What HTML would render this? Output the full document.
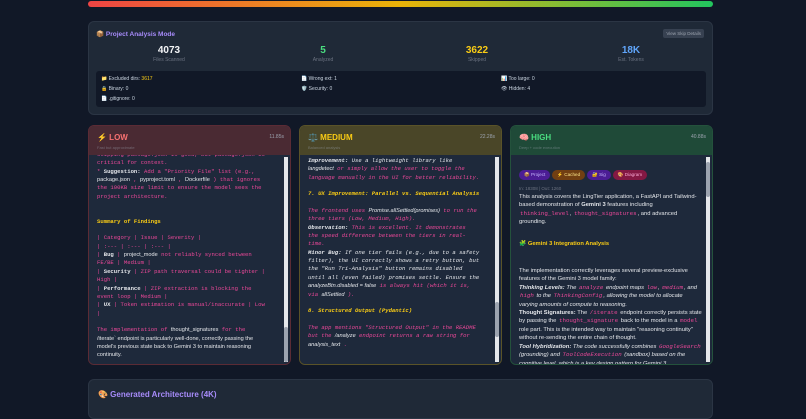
<!DOCTYPE html>
<html><head><meta charset="utf-8"><style>
*{box-sizing:border-box;margin:0;padding:0}
body{width:806px;height:407px;background:#111827;font-family:"Liberation Sans",sans-serif;overflow:hidden;position:relative;color:#d1d5db}
.bar{position:absolute;left:88px;top:1px;width:625px;height:6px;border-radius:3px;background:linear-gradient(90deg,#ef4444,#eab308 50%,#22c55e)}
.card{position:absolute;background:#1f2937;border:1px solid #2b3544;border-radius:6px}
.t{position:absolute;white-space:nowrap}
.num{font-weight:bold;font-size:10px;text-align:center;width:100px}
.lbl{font-size:5px;color:#6b7280;text-align:center;width:100px}
.sm{font-size:5px;color:#cbd5e1}
.col{position:absolute;top:125px;width:203px;height:240px;border-radius:6px;overflow:hidden;background:#1f2937}
.hd{height:29px;position:relative}
.hd b{position:absolute;left:8px;top:7px;font-size:8px}
.hd i{position:absolute;left:8px;top:19px;font-size:4px;color:#9ca3af;font-style:normal;opacity:.5}
.hd s{position:absolute;right:6px;top:8px;font-size:5px;color:#9ca3af;text-decoration:none}
.body{position:absolute;left:0;top:29px;right:0;bottom:0;background:#1e293b;padding:2px 10px 0 8px;overflow:hidden}
.sc{position:absolute;right:2px;top:31px;bottom:2px;width:4px;background:#e5e7eb}
.sc div{position:absolute;left:0;width:4px;background:#9ca3af;border-radius:2px}
.m{font-family:"Liberation Mono",monospace;font-size:5.6px;line-height:8.35px;color:#ec4899;white-space:pre}
.m b{color:#e5e7eb}.y{color:#facc15;font-weight:bold}
.p{font-family:"Liberation Sans",sans-serif;font-size:5.6px;color:#e5e7eb}
.it{font-style:italic}
.h{font-size:5.8px;line-height:8.4px;color:#e5e7eb}
.c{font-family:"Liberation Mono",monospace;color:#ec4899;padding:0 1px}
.tag{display:inline-block;font-size:4.6px;padding:2px 5px;border-radius:6px;margin-right:2px}
</style></head><body>
<div class="bar"></div>
<div class="card" style="left:88px;top:21px;width:625px;height:94px">
 <div class="t" style="left:7px;top:8px;font-size:6.5px;font-weight:bold;color:#a78bfa">📦 Project Analysis Mode</div>
 <div class="t" style="right:8px;top:7px;font-size:4.5px;color:#9ca3af;background:#374151;padding:2px 3px;border-radius:2px">View Skip Details</div>
 <div class="t num" style="left:30px;top:23px;color:#f3f4f6">4073</div>
 <div class="t lbl" style="left:30px;top:35px">Files Scanned</div>
 <div class="t num" style="left:184px;top:23px;color:#4ade80">5</div>
 <div class="t lbl" style="left:184px;top:35px">Analyzed</div>
 <div class="t num" style="left:338px;top:23px;color:#facc15">3622</div>
 <div class="t lbl" style="left:338px;top:35px">Skipped</div>
 <div class="t num" style="left:492px;top:23px;color:#60a5fa">18K</div>
 <div class="t lbl" style="left:492px;top:35px">Est. Tokens</div>
 <div style="position:absolute;left:7px;top:49px;width:610px;height:36px;background:#111827;border-radius:3px">
  <div class="t sm" style="left:5px;top:5px">📁 Excluded dirs: <span style="color:#facc15">3617</span></div>
  <div class="t sm" style="left:205px;top:5px">📄 Wrong ext: 1</div>
  <div class="t sm" style="left:405px;top:5px">📊 Too large: 0</div>
  <div class="t sm" style="left:5px;top:15px">🔒 Binary: 0</div>
  <div class="t sm" style="left:205px;top:15px">🛡️ Security: 0</div>
  <div class="t sm" style="left:405px;top:15px">👁 Hidden: 4</div>
  <div class="t sm" style="left:5px;top:25px">📄 .gitignore: 0</div>
 </div>
</div>

<div class="col" style="left:88px;border:1px solid #5b2b35">
 <div class="hd" style="background:#4a2a33"><b style="color:#f87171">⚡ LOW</b><i>Fast but approximate</i><s>11.85s</s></div>
 <div class="body"><div class="m" style="margin-top:-6px">skipping package.json is good, but package.json is
critical for context.
* <b>Suggestion:</b> Add a "Priority File" list (e.g.,
<span class="p">package.json</span> , <span class="p">pyproject.toml</span> , <span class="p">Dockerfile</span> ) that ignores
the 100KB size limit to ensure the model sees the
project architecture.


<span class="y">Summary of Findings</span>

| Category | Issue | Severity |
| :--- | :--- | :--- |
| <b>Bug</b> | <span class="p">project_mode</span> not reliably synced between
FE/BE | Medium |
| <b>Security</b> | ZIP path traversal could be tighter |
High |
| <b>Performance</b> | ZIP extraction is blocking the
event loop | Medium |
| <b>UX</b> | Token estimation is manual/inaccurate | Low
|

The implementation of <span class="p">thought_signatures</span> for the
<span class="p">/iterate` endpoint is particularly well-done, correctly passing the
model's previous state back to Gemini 3 to maintain reasoning
continuity.</span></div></div>
 <div class="sc"><div style="top:170px;height:35px"></div></div>
</div>

<div class="col" style="left:299px;border:1px solid #5a5328">
 <div class="hd" style="background:#4a4628"><b style="color:#facc15">⚖️ MEDIUM</b><i>Balanced analysis</i><s>22.28s</s></div>
 <div class="body"><div class="m it"><b>Improvement:</b> <span style="color:#e5e7eb">Use a lightweight library like</span>
<span class="p">langdetect</span> or simply allow the user to toggle the
language manually in the UI for better reliability.

<span class="y">7. UX Improvement: Parallel vs. Sequential Analysis</span>

The frontend uses <span class="p">Promise.allSettled(promises)</span> to run the
three tiers (Low, Medium, High).
<b>Observation:</b> This is excellent. It demonstrates
the speed difference between the tiers in real-
time.
<b>Minor Bug:</b> <span style="color:#e5e7eb">If one tier fails (e.g., due to a safety
filter), the UI correctly shows a retry button, but
the "Run Tri-Analysis" button remains disabled
until all (even failed) promises settle. Ensure the</span>
<span class="p">analyzeBtn.disabled = false</span> is always hit (which it is,
via <span class="p">allSettled</span> ).

<span class="y">8. Structured Output (Pydantic)</span>

The app mentions "Structured Output" in the README
but the <span class="p">/analyze</span> endpoint returns a raw string for
<span class="p">analysis_text</span> .</div></div>
 <div class="sc"><div style="top:145px;height:35px"></div></div>
</div>

<div class="col" style="left:510px;border:1px solid #24523c">
 <div class="hd" style="background:#1f4a38"><b style="color:#4ade80">🧠 HIGH</b><i>Deep + code execution</i><s>40.88s</s></div>
 <div class="body" style="padding-top:8px">
  <div><span class="tag" style="background:#4c1d95;color:#c4b5fd">📦 Project</span><span class="tag" style="background:#713f12;color:#fde68a">⚡ Cached</span><span class="tag" style="background:#4c1d95;color:#c4b5fd">🔐 Sig</span><span class="tag" style="background:#831843;color:#f9a8d4">🎨 Diagram</span></div>
  <div style="font-size:4.5px;color:#6b7280;margin-top:5px">In: 18308 | Out: 1260</div>
  <div class="h" style="margin-top:2px">This analysis covers the LingTier application, a FastAPI and Tailwind-based demonstration of <b>Gemini 3</b> features including <span class="c">thinking_level</span>, <span class="c">thought_signatures</span>, and advanced grounding.</div>
  <div class="h" style="margin-top:13px;color:#facc15;font-weight:bold">🧩 Gemini 3 Integration Analysis</div>
  <div class="h" style="margin-top:19px">The implementation correctly leverages several preview-exclusive features of the Gemini 3 model family:<br><b class="it">Thinking Levels:</b> <span class="it">The <span class="c">analyze</span> endpoint maps <span class="c">low</span>, <span class="c">medium</span>, and <span class="c">high</span> to the <span class="c">ThinkingConfig</span>, allowing the model to allocate varying amounts of compute to reasoning.</span><br><b>Thought Signatures:</b> The <span class="c">/iterate</span> endpoint correctly persists state by passing the <span class="c">thought_signature</span> back to the model in a <span class="c">model</span> role part. This is the intended way to maintain "reasoning continuity" without re-sending the entire chain of thought.<br><b class="it">Tool Hybridization:</b> <span class="it">The code successfully combines <span class="c">GoogleSearch</span> (grounding) and <span class="c">ToolCodeExecution</span> (sandbox) based on the cognitive level, which is a key design pattern for Gemini 3.</span></div>
 </div>
 <div class="sc"><div style="top:5px;height:35px"></div></div>
</div>

<div class="card" style="left:88px;top:379px;width:625px;height:40px">
 <div class="t" style="left:9px;top:10px;font-size:8px;font-weight:bold;color:#a78bfa">🎨 Generated Architecture (4K)</div>
</div>
</body></html>
